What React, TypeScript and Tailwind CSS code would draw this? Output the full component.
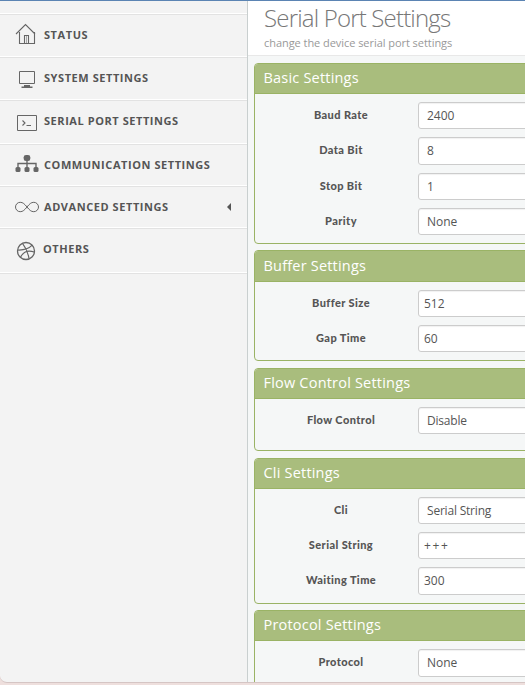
import type { ReactNode } from "react";

const icon = "overflow-visible fill-none stroke-[#666]";

function HomeIcon() {
  return (
    <svg className={`${icon} mt-2`} width="21" height="22" viewBox="0 0 21 22">
      <path d="M1 11 10.500 1.500 20 11M4.500 9v11.500h15V9" strokeWidth="1.1" />
      <path d="M9.500 20V12.500h4V20" strokeWidth="1.1" />
      <path d="M11.500 13v7" stroke="#aaa" strokeWidth="1" />
    </svg>
  );
}

function MonitorIcon() {
  return (
    <svg className={`${icon} mt-3`} width="21" height="19" viewBox="0 0 21 19">
      <path d="M4.500 1.500h15v12h-15z" />
      <path d="M9 15.700h6M6.500 17.200h11" strokeWidth="1.5" />
    </svg>
  );
}

function TerminalIcon() {
  return (
    <svg className={`${icon} mt-[13px]`} width="22" height="18" viewBox="0 0 22 18">
      <path d="M2.500 1.500h19v15h-19z" />
      <path d="m7.500 6.500 2.500 2.500-2.500 2.500M11.500 11.500h4.500" strokeWidth="1.1" />
    </svg>
  );
}

function NetworkIcon() {
  return (
    <svg className={`${icon} mt-[9px]`} width="24" height="19" viewBox="0 0 24 19">
      <path d="M12 6v8M3 14V9.500h18V14" strokeWidth="1.4" />
      <g className="fill-[#666] stroke-none">
        <rect x="8.700" y="1" width="6.600" height="6" rx="2.300" />
        <rect x="0.500" y="13" width="5" height="5" rx="1.500" />
        <rect x="9.500" y="13" width="5" height="5" rx="1.500" />
        <rect x="18.500" y="13" width="5" height="5" rx="1.500" />
      </g>
    </svg>
  );
}

function InfinityIcon() {
  return (
    <svg className={`${icon} mt-[14px]`} width="24" height="12" viewBox="0 0 24 12">
      <path d="M12 6C9.500 3 8 1.300 5.200 1.300a4.700 4.700 0 0 0 0 9.400C8 10.700 9.500 9 12 6s4-4.700 6.800-4.700a4.700 4.700 0 0 1 0 9.400C16 10.700 14.500 9 12 6Z" />
    </svg>
  );
}

function BallIcon() {
  return (
    <svg className={`${icon} mt-3`} width="22" height="20" viewBox="0 0 22 20">
      <circle cx="11" cy="10" r="8.500" strokeWidth="1.300" />
      <path d="M7.500 2.300c3.500 4.500 5.500 9 6.500 15.300M2.700 9C9 9.300 14 7.500 17.200 4.200M5.500 16.300c2.500-5.300 7.500-7.500 13.800-5.300" strokeWidth="1.200" />
    </svg>
  );
}

type NavItem = { text: string; row: string; slot?: string; icon: ReactNode; arrow?: boolean };

const nav: NavItem[] = [
  { text: "STATUS", row: "h-[43px]", icon: <HomeIcon /> },
  { text: "SYSTEM SETTINGS", row: "h-[43px]", icon: <MonitorIcon /> },
  { text: "SERIAL PORT SETTINGS", row: "h-11", icon: <TerminalIcon /> },
  { text: "COMMUNICATION SETTINGS", row: "h-[42px]", icon: <NetworkIcon /> },
  { text: "ADVANCED SETTINGS", row: "h-[42px]", icon: <InfinityIcon />, arrow: true },
  { text: "OTHERS", row: "h-[45px]", slot: "w-7", icon: <BallIcon /> },
];

type Field = { name: string; value: string; tall?: boolean; select?: boolean; spacing?: string };
type Group = { title: string; box: string; head?: string; fields: Field[] };

const groups: Group[] = [
  {
    title: "Basic Settings",
    box: "h-[181px]",
    fields: [
      { name: "Baud Rate", value: "2400", select: true },
      { name: "Data Bit", value: "8", select: true, tall: true },
      { name: "Stop Bit", value: "1", select: true },
      { name: "Parity", value: "None", select: true },
    ],
  },
  {
    title: "Buffer Settings",
    box: "mt-1.5 h-[111px]",
    head: "h-[31px] leading-[29px]",
    fields: [
      { name: "Buffer Size", value: "512" },
      { name: "Gap Time", value: "60" },
    ],
  },
  {
    title: "Flow Control Settings",
    box: "mt-[7px] h-[83px]",
    fields: [{ name: "Flow Control", value: "Disable", select: true, spacing: "tracking-[-0.2px]" }],
  },
  {
    title: "Cli Settings",
    box: "mt-[7px] h-[146px]",
    fields: [
      { name: "Cli", value: "Serial String", select: true, spacing: "tracking-[-0.2px]" },
      { name: "Serial String", value: "+++", spacing: "tracking-[1.6px]" },
      { name: "Waiting Time", value: "300", tall: true },
    ],
  },
  {
    title: "Protocol Settings",
    box: "mt-1.5 h-[100px]",
    fields: [{ name: "Protocol", value: "None", select: true, tall: true }],
  },
];

function FieldRow({ name, value, tall, select, spacing }: Field) {
  return (
    <div className="flex">
      <div className="w-[163px] pl-[9px] text-center font-['Lato','Open_Sans',sans-serif] text-[11px] leading-[26px] font-black tracking-[0.4px]">
        {name}
      </div>
      <div
        className={`flex-1 rounded-[3px] border border-[#ccc] bg-white text-[12px] leading-[26px] shadow-[inset_0_1px_1px_rgba(0,0,0,0.06)] ${tall ? "h-7" : "h-[27px]"} ${select ? "pl-2" : "pl-[5px]"} ${spacing ?? ""}`}
      >
        {value}
      </div>
    </div>
  );
}

export default function App() {
  return (
    <div className="h-[685px] w-[525px] overflow-hidden bg-[#eedfdd] font-['Open_Sans','Noto_Sans',sans-serif] text-[#555]">
      <div className="flex h-[683px] overflow-hidden rounded-bl-[7px] border-t border-b border-t-[#5b84b3] border-b-[#d5c5c4] bg-[#f3f3f3]">
        <nav className="flex w-[248px] shrink-0 flex-col border-r border-[#c9cfcf] pt-3">
          {nav.map((n) => (
            <div key={n.text} className={`border-t border-white ${n.row}`}>
              <div className="flex items-start border-t border-[#e2e2e2] pr-4 pl-[15px]">
                <div className={`shrink-0 ${n.slot ?? "w-[29px]"}`}>{n.icon}</div>
                <span className="pt-2.5 text-[11px] leading-5 font-bold tracking-[0.56px] whitespace-nowrap">{n.text}</span>
                {n.arrow && (
                  <svg className="mt-4 ml-auto" width="4" height="8" viewBox="0 0 4 8" fill="#555">
                    <path d="M4 0v8L0 4z" />
                  </svg>
                )}
              </div>
            </div>
          ))}
          <div className="border-t border-b border-t-white border-b-[#e2e2e2]" />
        </nav>
        <main className="min-w-0 flex-1 overflow-hidden bg-[#f5f7f7]">
          <header className="h-[55px] border-b border-[#e8e8e8] bg-white pl-4">
            <h1 className="text-[24px] leading-[34px] font-light tracking-[-0.82px] text-[#777]">Serial Port Settings</h1>
            <p className="text-[11px] leading-4 tracking-[-0.05px] text-[#999]">change the device serial port settings</p>
          </header>
          <div className="w-[400px] pt-[7px] pl-1.5">
            {groups.map((g) => (
              <section key={g.title} className={`overflow-hidden rounded-[4px] border border-[#9ab365] ${g.box}`}>
                <h2
                  className={`border-b border-[#9ab365] bg-[#a9bd7d] pl-[8.5px] text-[14.5px] tracking-[0.2px] text-white ${g.head ?? "h-[30px] leading-[28px]"}`}
                >
                  {g.title}
                </h2>
                <div className="flex flex-col gap-2 pt-2">
                  {g.fields.map((f) => (
                    <FieldRow key={f.name} {...f} />
                  ))}
                </div>
              </section>
            ))}
          </div>
        </main>
      </div>
    </div>
  );
}
